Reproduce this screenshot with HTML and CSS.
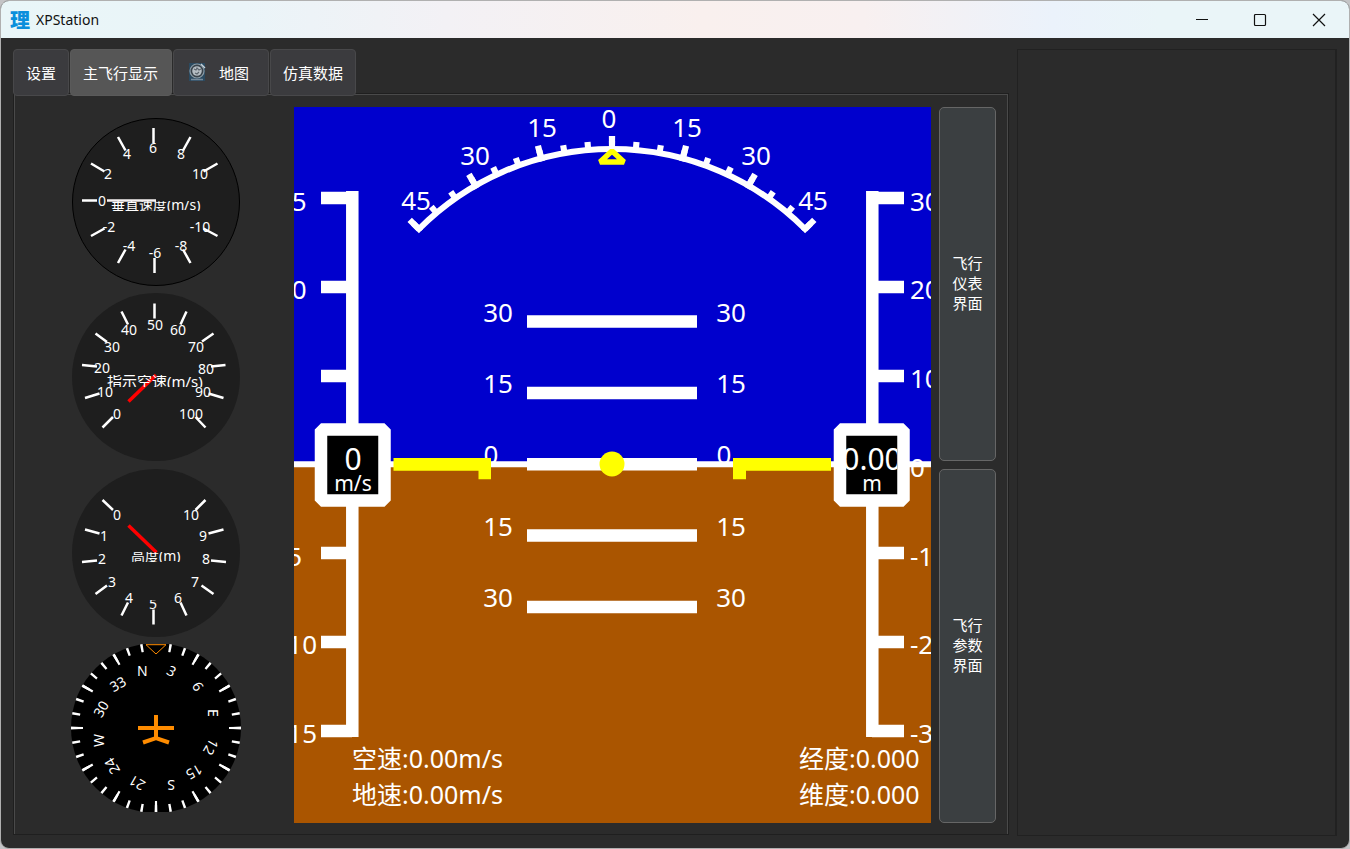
FILE: index.html
```html
<!DOCTYPE html>
<html lang="zh-CN">
<head>
<meta charset="utf-8">
<title>XPStation</title>
<link rel="stylesheet" href="styles.css">
</head>
<body>
<div class="window">
  <header class="titlebar">
    <span class="logo" aria-hidden="true">理</span>
    <h1 class="title">XPStation</h1>
    <button class="win-btn" type="button" aria-label="最小化"><svg width="14" height="14" viewBox="0 0 14 14"><path d="M1 6.5H13"/></svg></button>
    <button class="win-btn" type="button" aria-label="最大化"><svg width="14" height="14" viewBox="0 0 14 14"><rect x="1.5" y="1.5" width="11" height="11" rx="1"/></svg></button>
    <button class="win-btn" type="button" aria-label="关闭"><svg width="14" height="14" viewBox="0 0 14 14"><path d="M1 1L13 13M13 1L1 13"/></svg></button>
  </header>

  <main class="content">
    <section class="station">
      <div class="tabs" role="tablist">
        <button class="tab" role="tab" type="button">设置</button>
        <button class="tab tab-active" role="tab" type="button" aria-selected="true">主飞行显示</button>
        <button class="tab tab-map" role="tab" type="button">
          <svg class="tab-icon" width="18" height="20" viewBox="0 0 18 20">
            <rect x="1" y="1" width="16" height="18" fill="#2b4a60"/>
            <circle cx="9" cy="9" r="7" fill="#39434b" stroke="#8b9ba6" stroke-width="1.2"/>
            <circle cx="9" cy="9" r="4.8" fill="#b4bcc2"/>
            <path d="M6 7L8 8L9 6L11 8L13 7M7 11L9 12L11 10" fill="none" stroke="#5d666e" stroke-width="1.1"/>
            <path d="M13 2L17 6" stroke="#c9d3da" stroke-width="1.2"/>
            <path d="M3 17.5H15" stroke="#75899a" stroke-width="1.5"/>
          </svg>
          地图
        </button>
        <button class="tab" role="tab" type="button">仿真数据</button>
      </div>

      <div class="pane" role="tabpanel">
        <div class="gauges">
          <svg class="gauge" viewBox="0 0 170 168" role="img" aria-label="垂直速度">
            <clipPath id="vs-title"><rect x="36" y="83" width="100" height="10"/></clipPath>
            <clipPath id="vs-upper"><rect x="0" y="51" width="170" height="20"/></clipPath>
            <circle class="dial" cx="85" cy="84" r="83.5" stroke="#000" stroke-width="1"/>
            <path class="tick" d="M11 82.5H26M20 45.5L33.5 53.5M47 19L54.5 32.5M82.5 10V25M119.5 19L112 32.5M146.5 45.5L132.5 53.5M20 118L33.5 110.5M47 145L54.5 131.5M83.5 140V155M119.5 145L112 131.5M146.5 118L132.5 110.5"/>
            <path d="M36 82.5H85" stroke="#f4f0f0" stroke-width="2.5"/>
            <g class="num">
              <text x="31" y="88">0</text><g clip-path="url(#vs-upper)"><text x="37" y="61">2</text><text x="129" y="61">10</text></g>
              <text x="56" y="41">4</text><text x="82" y="35">6</text><text x="110" y="41">8</text>
              <text x="38" y="114">-2</text><text x="58" y="133">-4</text><text x="84" y="140">-6</text><text x="110" y="133">-8</text><text x="129" y="114">-10</text>
            </g>
            <g clip-path="url(#vs-title)"><text class="name name-sm" x="40" y="92">垂直速度(m/s)</text></g>
          </svg>

          <svg class="gauge" viewBox="0 0 170 168" role="img" aria-label="指示空速">
            <clipPath id="as-title"><rect x="30" y="82" width="110" height="12"/></clipPath>
            <circle class="dial" cx="85" cy="84" r="84"/>
            <path class="tick" d="M31.5 134.5L42 124M14 105L28.5 100.5M11 72L26 73.5M24.5 40.5L36 49M50.5 18.5L57 31.5M83.5 10.5V25.5M115.5 18.5L109.5 31.5M142.5 40.5L131 48.5M154.5 72L140 73.5M152.5 105L137.5 100.5M134.5 134.5L124.5 124"/>
            <path class="needle" d="M57.5 108.5L85 82"/>
            <g class="num">
              <text x="46" y="126">0</text><text x="34" y="104">10</text><text x="31" y="80">20</text><text x="41" y="59">30</text><text x="58" y="42">40</text><text x="84" y="37">50</text>
              <text x="107" y="42">60</text><text x="125" y="59">70</text><text x="135" y="81">80</text><text x="132" y="104">90</text><text x="120" y="126">100</text>
            </g>
            <g clip-path="url(#as-title)"><text class="name" x="36" y="94">指示空速(m/s)</text></g>
          </svg>

          <svg class="gauge" viewBox="0 0 170 168" role="img" aria-label="高度">
            <clipPath id="al-title"><rect x="50" y="83" width="80" height="10"/></clipPath>
            <clipPath id="al-five"><rect x="70" y="131" width="30" height="20"/></clipPath>
            <clipPath id="al-zero"><rect x="30" y="41" width="110" height="20"/></clipPath>
            <circle class="dial" cx="85" cy="84" r="84"/>
            <path class="tick" d="M31.5 31L42 41M14 60.5L28.5 64.5M11 93L26 91.5M24.5 125L36 116.5M50.5 146.5L57 133.5M82.5 155.5V140.5M115.5 146.5L109.5 133.5M142.5 125L130.5 116.5M155 93L140 91.5M152.5 60.5L137.5 64.5M134.5 31L124.5 41"/>
            <path class="needle" d="M57.5 56.5L85.5 83.5"/>
            <g class="num">
              <g clip-path="url(#al-zero)"><text x="46" y="51">0</text><text x="120" y="51">10</text></g>
              <text x="33" y="72">1</text><text x="31" y="95">2</text><text x="41" y="118">3</text><text x="58" y="134">4</text>
              <g clip-path="url(#al-five)"><text x="82" y="140">5</text></g>
              <text x="107" y="134">6</text><text x="124" y="118">7</text><text x="135" y="95">8</text><text x="132" y="72">9</text>
            </g>
            <g clip-path="url(#al-title)"><text class="name name-sm" x="60" y="92">高度(m)</text></g>
          </svg>

          <svg class="gauge" viewBox="0 0 170 168" role="img" aria-label="航向">
            <circle cx="85" cy="84" r="85" fill="#000"/>
            <circle cx="85" cy="84" r="81" fill="none" stroke="#fff" stroke-width="8" pathLength="360" stroke-dasharray="1.7 8.3" stroke-dashoffset=".85"/>
            <circle cx="85" cy="84" r="79" fill="none" stroke="#fff" stroke-width="12" pathLength="360" stroke-dasharray="1.7 28.3" stroke-dashoffset=".85"/>
            <rect x="80" y="0" width="10" height="13" fill="#000"/>
            <path d="M75 .7H95L85 10Z" fill="none" stroke="#ff8c00"/>
            <g class="card" transform="translate(85 84)">
              <text x="-19" y="-52">N</text>
              <text x="-19" y="-52" transform="rotate(30)">3</text>
              <text x="-19" y="-52" transform="rotate(60)">6</text>
              <text x="-19" y="-52" transform="rotate(90)">E</text>
              <text x="-19" y="-52" transform="rotate(120)">12</text>
              <text x="-19" y="-52" transform="rotate(150)">15</text>
              <text x="-19" y="-52" transform="rotate(180)">S</text>
              <text x="-19" y="-52" transform="rotate(210)">21</text>
              <text x="-19" y="-52" transform="rotate(240)">24</text>
              <text x="-19" y="-52" transform="rotate(270)">W</text>
              <text x="-19" y="-52" transform="rotate(300)">30</text>
              <text x="-19" y="-52" transform="rotate(330)">33</text>
            </g>
            <path d="M85 71V94M67 84H103M72 98.5L85 94L98 98.5" fill="none" stroke="#ff8c00" stroke-width="4"/>
          </svg>
        </div>

        <svg class="pfd" viewBox="0 0 637 716" preserveAspectRatio="xMidYMid slice" role="img" aria-label="主飞行显示">
          <rect width="637" height="716" fill="#a50"/>
          <rect width="637" height="357" fill="#0000cd"/>
          <path d="M0 357.3H637" stroke="#fff" stroke-width="6"/>

          <g fill="none" stroke="#fff">
            <path d="M125 122A273 273 0 0 1 511 122" stroke-width="6"/>
            <path d="M118.7 122.6A277 277 0 0 1 517.3 122.6" stroke-width="8" pathLength="92" stroke-dasharray="1.26 3.74" stroke-dashoffset="-.37"/>
            <path d="M118 121.9A278 278 0 0 1 518 121.9" stroke-width="16" pathLength="92" stroke-dasharray="1.26 13.74" stroke-dashoffset="-.37"/>
            <path d="M233 214.5H403M233 286H403M233 357.3H403M233 428.5H403M233 500H403" stroke-width="12.5"/>
            <path d="M58.3 84V630M27 91H58M27 180H58M27 269H58M27 446H58M27 535H58M27 624H58" stroke-width="12.5"/>
            <path d="M578.3 84V630M578 91H610M578 180H610M578 269H610M578 446H610M578 535H610M578 624H610" stroke-width="12.5"/>
          </g>
          <path d="M318 44L330 55H306Z" fill="none" stroke="#ff0" stroke-width="5.5" stroke-linejoin="bevel"/>

          <g class="scale scale-mid">
            <text x="315" y="21">0</text>
            <text x="248" y="30">15</text><text x="393" y="30">15</text>
            <text x="181" y="58">30</text><text x="462" y="58">30</text>
            <text x="122" y="103">45</text><text x="519" y="103">45</text>
            <text x="204" y="215">30</text><text x="437" y="215">30</text>
            <text x="204" y="286">15</text><text x="437" y="286">15</text>
            <text x="197" y="357">0</text><text x="430" y="357">0</text>
            <text x="204" y="429">15</text><text x="437" y="429">15</text>
            <text x="204" y="500">30</text><text x="437" y="500">30</text>
          </g>
          <g class="scale">
            <text x="-17" y="104">15</text><text x="-17" y="192">10</text><text x="-15" y="459">-5</text><text x="-15" y="547">-10</text><text x="-15" y="636">-15</text>
            <text x="616" y="104">30</text><text x="616" y="192">20</text><text x="616" y="281">10</text><text x="616" y="370">0</text><text x="616" y="459">-10</text><text x="616" y="547">-20</text><text x="616" y="636">-30</text>
          </g>

          <path d="M99.5 351H197V372.3H184.5V363.7H99.5ZM537 351H439V372.3H452V363.7H537Z" fill="#ff0"/>
          <circle cx="318" cy="357" r="12.5" fill="#ff0"/>

          <rect class="readout" x="27" y="322.5" width="63.5" height="71"/>
          <rect class="readout" x="546" y="322.5" width="63.5" height="71"/>
          <clipPath id="alt-box"><rect x="552" y="328" width="51" height="60"/></clipPath>
          <g class="value">
            <text x="59" y="363">0</text>
            <g clip-path="url(#alt-box)"><text x="578" y="363">0.00</text></g>
          </g>
          <g class="unit"><text x="59" y="384">m/s</text><text x="578" y="384">m</text></g>

          <g class="info">
            <text x="58" y="661">空速:0.00m/s</text><text x="58" y="697">地速:0.00m/s</text>
            <text x="505" y="661">经度:0.000</text><text x="505" y="697">维度:0.000</text>
          </g>
        </svg>

        <nav class="views">
          <button class="view-btn" type="button">飞行<br>仪表<br>界面</button>
          <button class="view-btn" type="button">飞行<br>参数<br>界面</button>
        </nav>
      </div>
    </section>
    <aside class="side"></aside>
  </main>
</div>
</body>
</html>
```

FILE: styles.css
```css
* { box-sizing: border-box; }

body {
  margin: 0;
  background: #c4c4c6;
  color: #fff;
  font-family: "Noto Sans", "Noto Sans CJK SC", sans-serif;
  font-size: 15px;
}

button {
  margin: 0;
  font: inherit;
  color: inherit;
}

.window {
  display: flex;
  flex-direction: column;
  height: 100vh;
  overflow: hidden;
  border: 1px solid #b0b0b0;
  border-radius: 9px;
  background: #2b2b2b;
}

.titlebar {
  display: flex;
  align-items: center;
  flex: none;
  height: 37px;
  padding-left: 9px;
  background: linear-gradient(90deg, #e9f6f8 0%, #eaf4f8 18%, #f3f1f5 33%, #f9f0ee 52%, #f8f0f0 64%, #ebf2fb 78%, #eaf5f8 86%, #eaf5f8 100%);
  color: #111;
}

.logo {
  width: 20px;
  margin-right: 6px;
  color: #0a8fdc;
  font: 900 20px/20px "Noto Sans CJK SC", sans-serif;
}

.title {
  flex: 1;
  margin: 0;
  font-size: 14px;
  font-weight: 400;
}

.win-btn {
  display: flex;
  align-items: center;
  justify-content: center;
  width: 58px;
  height: 37px;
  padding: 0;
  border: 0;
  background: none;
}

.win-btn:last-child { width: 60px; }

.win-btn svg {
  fill: none;
  stroke: #111;
  stroke-width: 1.2;
}

.content {
  display: flex;
  flex: 1;
  gap: 8px;
  min-height: 0;
  padding: 11px 12px 12px;
}

.station {
  display: flex;
  flex: 1;
  flex-direction: column;
  min-width: 0;
}

.tabs {
  position: relative;
  display: flex;
  gap: 1px;
  margin-bottom: -3px;
}

.tab {
  display: flex;
  align-items: center;
  height: 47px;
  padding: 0 12px;
  border: 1px solid #48484a;
  border-radius: 4px;
  background: #3b3b3e;
}

.tab-active {
  padding-right: 13px;
  border-color: #5a5a5a;
  background: #565656;
}

.tab-map {
  gap: 13px;
  padding: 0 19px 0 14px;
}

.tab-icon { margin-bottom: 2px; }

.pane {
  display: flex;
  flex: 1;
  min-height: 0;
  margin-bottom: 1px;
  padding: 13px 12px 11px 57px;
  border: 1px solid #1f1f1f;
  box-shadow: inset 1px 1px #4a4a4a, inset -1px 0 #4a4a4a;
}

.gauges {
  display: flex;
  flex: none;
  flex-direction: column;
  justify-content: space-between;
  width: 170px;
  margin-right: 53px;
  padding: 11px 0;
}

.gauge {
  display: block;
  width: 100%;
}

.dial { fill: #1e1e1e; }

.tick {
  fill: none;
  stroke: #fff;
  stroke-width: 2.5;
}

.needle {
  stroke: #f00;
  stroke-width: 3.5;
}

.num {
  fill: #fff;
  font-size: 14px;
  text-anchor: middle;
}

.name {
  fill: #fff;
  font-size: 15px;
}

.name-sm { font-size: 14px; }

.card {
  fill: #fff;
  font-size: 14px;
}

.pfd {
  flex: 1 1 0;
  min-width: 0;
  height: 100%;
}

.scale {
  fill: #fff;
  font-size: 26px;
}

.scale-mid,
.value,
.unit { text-anchor: middle; }

.readout {
  fill: #000;
  stroke: #fff;
  stroke-width: 12.5;
  stroke-linejoin: bevel;
}

.value {
  fill: #fff;
  font-size: 30px;
}

.unit {
  fill: #fff;
  font-size: 21px;
}

.info {
  fill: #fff;
  font-size: 25px;
}

.views {
  display: flex;
  flex: none;
  flex-direction: column;
  gap: 8px;
  width: 57px;
  margin-left: 8px;
}

.view-btn {
  flex: 1;
  padding: 0 0 2px;
  border: 1px solid #666;
  border-radius: 5px;
  background: #3b3f41;
  line-height: 20px;
}

.side {
  flex: none;
  width: 320px;
  border: 1px solid #212121;
  border-right-width: 2px;
}
```
